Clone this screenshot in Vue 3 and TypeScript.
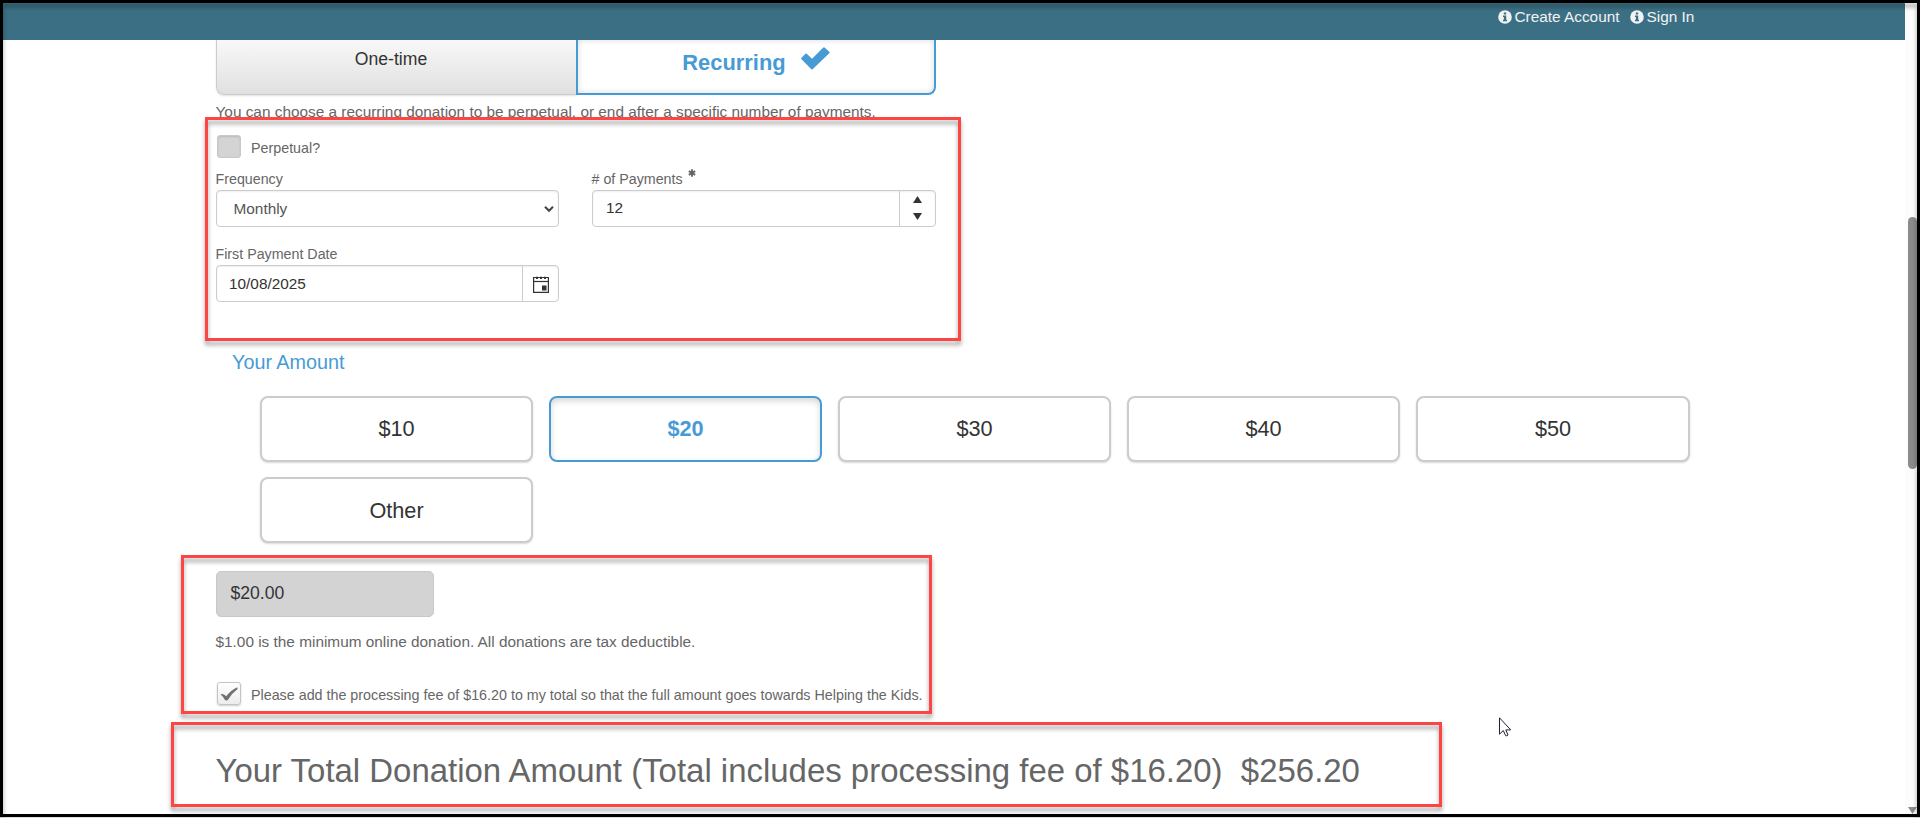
<template>
  <div class="page">
    <header class="topbar">
      <a v-for="link in links" :key="link" class="topbar-link">
        <svg class="info" viewBox="0 0 14 14">
          <circle cx="7" cy="7" r="6.8" fill="#f2f2f2" />
          <path d="M5.8 2.5h2.4v2H5.8zM5 5.6h3.2v4.1H9v1.5H5V9.700h.9V7.100H5z" fill="#3b7084" />
        </svg>
        <span>{{ link }}</span>
      </a>
    </header>

    <main class="content">
      <div class="tabs">
        <div class="tab tab-once"><span>One-time</span></div>
        <div class="tab tab-recurring">
          <span>Recurring</span>
          <svg class="tab-check" viewBox="0 0 29 23">
            <path d="M.5 10.800 4.500 6.800Q5.300 6.200 6 6.900L11 11.700 22.300.6Q23.100 0 23.900.7L28.200 4.700Q28.900 5.500 28.200 6.300L11.900 22Q11 22.800 10.100 22L.5 12.300Q-.1 11.500.5 10.800Z" fill="#469bd5" />
          </svg>
        </div>
      </div>

      <p class="help"><span>You can choose a recurring donation to be perpetual, or end after a specific number of payments.</span></p>

      <div class="check-row perpetual">
        <span class="box box-off"></span>
        <span class="perpetual-label">Perpetual?</span>
      </div>

      <div class="field-row">
        <div class="field">
          <label class="label">Frequency</label>
          <div class="control select">
            <span>{{ frequency }}</span>
            <svg class="chevron" viewBox="0 0 10 8">
              <path d="M1 1.800 5 5.800 9 1.800" fill="none" stroke="#444" stroke-width="2" />
            </svg>
          </div>
        </div>
        <div class="field">
          <label class="label">
            <span># of Payments</span>
            <svg class="required" viewBox="0 0 8 8">
              <path d="M4 .3V7.700M.8 2.200 7.200 5.800M7.200 2.200.8 5.800" stroke="#666" stroke-width="1.900" />
            </svg>
          </label>
          <div class="control number">
            <span>{{ payments }}</span>
            <div class="spinner">
              <svg viewBox="0 0 9 7"><path d="M4.500 0 9 7H0z" fill="#333" /></svg>
              <svg viewBox="0 0 9 7"><path d="M4.500 7 9 0H0z" fill="#333" /></svg>
            </div>
          </div>
        </div>
      </div>

      <div class="field-row second">
        <div class="field">
          <label class="label">First Payment Date</label>
          <div class="control date">
            <span>{{ firstDate }}</span>
            <div class="picker">
              <svg viewBox="0 0 16 17">
                <path d="M.6 1.500h14.800v14.900H.6z" fill="#fff" stroke="#333" stroke-width="1.200" />
                <path d="M.5 5.500h15" stroke="#333" stroke-width="1.200" />
                <path d="M3 .8h2v2.200H3zM7 .8h2v2.200H7zM11 .8h2v2.200H11zM9 9.500h4.500v5H9z" fill="#333" />
              </svg>
            </div>
          </div>
        </div>
      </div>

      <h3 class="amount-title">Your Amount</h3>
      <div class="amounts">
        <button
          v-for="a in amounts"
          :key="a"
          class="amount"
          :class="{ selected: a === selected, other: a === 'Other' }"
          @click="selected = a"
        >
          {{ a }}
        </button>
      </div>

      <div class="amount-input">$20.00</div>
      <p class="hint"><span>$1.00 is the minimum online donation. All donations are tax deductible.</span></p>

      <div class="check-row fee">
        <span class="box box-on">
          <svg viewBox="0 0 18 14">
            <path d="M.5 7.200Q3 6.200 6.300 9.300 10.500 3.500 17.300.3L17.600 2Q11.500 6.500 7.800 13 6 14.200 4.800 12.700 3 9.500.5 7.200Z" fill="#707070" />
          </svg>
        </span>
        <span class="fee-label">Please add the processing fee of $16.20 to my total so that the full amount goes towards Helping the Kids.</span>
      </div>

      <h1 class="total"><span>Your Total Donation Amount (Total includes processing fee of $16.20)&nbsp; $256.20</span></h1>
    </main>

    <div class="scrollbar">
      <div class="thumb"></div>
      <svg class="arrow" viewBox="0 0 9 7"><path d="M0 0h9L4.500 7z" fill="#8b8b8b" /></svg>
    </div>

    <!-- callout rectangles over the form -->
    <div class="callout callout-schedule"></div>
    <div class="callout callout-fee"></div>
    <div class="callout callout-total"></div>

    <svg class="cursor" viewBox="0 0 13 20">
      <path d="M.5.8V17.200L4.300 13.600 6.600 18.600Q7.700 19.300 9 18L6.800 12.900H11.700Z" fill="#fff" stroke="#223" stroke-width="1" />
    </svg>
    <div class="frame"></div>
  </div>
</template>

<script setup lang="ts">
import { ref } from 'vue';

const links: string[] = ['Create Account', 'Sign In'];
const amounts: string[] = ['$10', '$20', '$30', '$40', '$50', 'Other'];

const selected = ref('$20');
const frequency = ref('Monthly');
const payments = ref(12);
const firstDate = ref('10/08/2025');
</script>

<style>
body {
  margin: 0;
  background: #ccc;
}
</style>

<style scoped>
.page {
  position: relative;
  width: 1920px;
  height: 818px;
  overflow: hidden;
  box-sizing: border-box;
  background: #fff;
  color: #666;
  font-family: "Liberation Sans", Arial, sans-serif;
  font-size: 15.360px;
}

.topbar {
  display: flex;
  gap: 10px;
  box-sizing: border-box;
  width: 1905px;
  height: 40px;
  padding: 7px 0 0 1497.500px;
  background: #3b7084;
  color: #f2f2f2;
}
.topbar-link {
  display: flex;
  gap: 3px;
  height: 20px;
  line-height: 20px;
  white-space: nowrap;
}
.info {
  width: 14px;
  height: 14px;
  margin-top: 3px;
}

.content {
  padding-left: 215.500px;
}
.tabs {
  display: flex;
  width: 720px;
  height: 55px;
  margin-left: .5px;
}
.tab {
  display: flex;
  justify-content: center;
  box-sizing: border-box;
  width: 360px;
  height: 55px;
}
.tab-once {
  border: 1px solid #ccc;
  border-width: 0 0 1px 1px;
  border-radius: 0 0 0 8px;
  background: linear-gradient(#f8f8f8, #e0e0e0);
  box-shadow: 0 1px 2px rgba(0, 0, 0, .12);
  color: #333;
  font-size: 17.600px;
  line-height: 38px;
  padding-right: 11px;
}
.tab-recurring {
  gap: 15px;
  border: 2px solid #469bd5;
  border-top: 0;
  border-radius: 0 0 8px 0;
  box-shadow: inset 0 0 6px rgba(0, 0, 0, .14);
  color: #469bd5;
  font-size: 21.900px;
  font-weight: bold;
  line-height: 45px;
}
.tab-check {
  width: 29px;
  height: 23px;
  margin-top: 7px;
}

.help,
.hint {
  margin: 0;
  height: 32px;
  line-height: 34px;
  white-space: nowrap;
}

.check-row {
  display: flex;
  gap: 10px;
  padding-left: 1.500px;
  white-space: nowrap;
  font-size: 14.300px;
}
.perpetual {
  height: 33px;
  padding-top: 8px;
  line-height: 27px;
}
.box {
  display: flex;
  align-items: center;
  justify-content: center;
  box-sizing: border-box;
  width: 24px;
  height: 23px;
  border: 1px solid #c8c8c8;
  border-radius: 3px;
}
.box-off {
  background: #d4d4d4;
  box-shadow: inset 0 1px 2px rgba(0, 0, 0, .12);
}
.box-on {
  border-color: #c4c4c4;
  background: linear-gradient(#fff, #ececec);
  box-shadow: 0 1px 2px rgba(0, 0, 0, .2);
}
.box-on svg {
  width: 18px;
  height: 14px;
}

.field-row {
  display: flex;
  gap: 33px;
  padding-left: .5px;
}
.field-row.second {
  margin-top: 16px;
}
.field {
  width: 343px;
}
.field + .field {
  width: 344px;
}
.label {
  display: flex;
  height: 22px;
  margin-left: -.5px;
  font-size: 14.250px;
  line-height: 22px;
}
.required {
  width: 8px;
  height: 8px;
  margin: 1px 0 0 5.500px;
}
.control {
  display: flex;
  justify-content: space-between;
  box-sizing: border-box;
  height: 37px;
  border: 1px solid #ccc;
  border-radius: 4px;
  background: #fff;
  box-shadow: inset 0 1px 2px rgba(0, 0, 0, .07);
  color: #333;
  line-height: 34px;
}
.select {
  padding: 0 4px 0 16.500px;
  color: #555;
  line-height: 35px;
}
.chevron {
  width: 10px;
  height: 8px;
  margin-top: 14px;
}
.number {
  padding-left: 13px;
}
.date {
  padding-left: 12px;
  line-height: 36px;
}
.spinner,
.picker {
  display: flex;
  flex-direction: column;
  align-items: center;
  box-sizing: border-box;
  border-left: 1px solid #ccc;
}
.spinner {
  gap: 10px;
  width: 36px;
  padding-top: 5px;
}
.spinner svg {
  width: 9px;
  height: 7px;
}
.picker {
  width: 36px;
  padding: 10px 0 0;
}
.picker svg {
  width: 16px;
  height: 17px;
}

.amount-title {
  margin: 40px 0 14px 16.500px;
  height: 40px;
  line-height: 40px;
  color: #469bd5;
  font-size: 19.800px;
  font-weight: normal;
}
.amounts {
  display: grid;
  grid-template-columns: repeat(4, 273px) 274px;
  grid-auto-rows: 66px;
  gap: 15px 16px;
  margin-left: 44.500px;
}
.amount {
  box-sizing: border-box;
  padding: 0;
  border: 2px solid #ccc;
  border-radius: 8px;
  background: #fff;
  box-shadow: 0 1px 2px rgba(0, 0, 0, .15);
  color: #333;
  font-family: inherit;
  font-size: 21.700px;
}
.amount.other {
  padding: 2px 0 0;
}
.amount.selected {
  border-color: #469bd5;
  box-shadow: inset 0 3px 6px rgba(0, 0, 0, .16);
  color: #469bd5;
  font-weight: bold;
}

.amount-input {
  box-sizing: border-box;
  width: 218px;
  height: 46px;
  margin: 28px 0 0 .5px;
  padding-left: 13.500px;
  border: 1px solid #c8c8c8;
  border-radius: 5px;
  background: #d3d3d3;
  color: #333;
  font-size: 17.600px;
  line-height: 43px;
}
.hint {
  height: 30px;
  margin-top: 10px;
  line-height: 30px;
}
.fee {
  height: 23px;
  margin-top: 25px;
  line-height: 27px;
}
.total {
  margin: 45px 0 0;
  height: 40px;
  line-height: 42px;
  font-size: 32.950px;
  font-weight: normal;
  white-space: nowrap;
}

.scrollbar {
  position: absolute;
  top: 0;
  right: 3px;
  display: flex;
  flex-direction: column;
  align-items: flex-end;
  justify-content: space-between;
  box-sizing: border-box;
  width: 12px;
  height: 814px;
  padding-top: 217px;
  background: #fcfcfc;
}
.thumb {
  width: 9px;
  height: 252px;
  border-radius: 5px;
  background: #8b8b8b;
}
.arrow {
  width: 9px;
  height: 7px;
}

.callout {
  position: absolute;
  box-sizing: border-box;
  border: 3px solid #ff4444;
  filter: drop-shadow(0 4px 2px rgba(0, 0, 0, .36));
}
.callout-schedule {
  left: 205px;
  top: 117px;
  width: 756px;
  height: 224px;
}
.callout-fee {
  left: 181px;
  top: 555px;
  width: 751px;
  height: 159px;
}
.callout-total {
  left: 171px;
  top: 722px;
  width: 1271px;
  height: 85px;
}

.cursor {
  position: absolute;
  left: 1499px;
  top: 717px;
  width: 13px;
  height: 20px;
}
.frame {
  position: absolute;
  inset: 0 0 1px;
  border: 3px solid #000;
  filter: drop-shadow(0 4px 2px rgba(0, 0, 0, .36));
  pointer-events: none;
}
</style>
